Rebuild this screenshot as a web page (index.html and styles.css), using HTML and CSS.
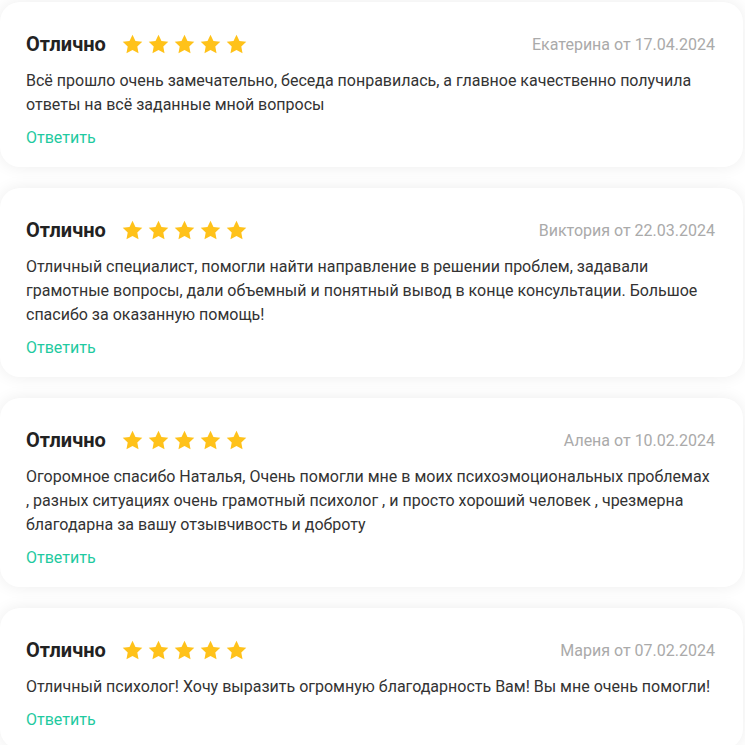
FILE: index.html
```html
<!DOCTYPE html>
<html lang="ru">
<head>
    <meta charset="UTF-8">
    <meta name="viewport" content="width=device-width, initial-scale=1.0">
    <title>Отзывы</title>
    <link rel="stylesheet" href="styles.css">
</head>
<body>

    <!-- Reviews list -->
    <div class="reviews">

        <div class="review">
            <div class="review-head">
                <div class="review-title">Отлично</div>
                <div class="stars">
                    <svg viewBox="0 0 24 24"><path d="M12 1.8l3.1 6.5 7.1.9-5.2 4.9 1.3 7.1L12 17.8l-6.3 3.4 1.3-7.1-5.2-4.9 7.1-.9z"/></svg>
                    <svg viewBox="0 0 24 24"><path d="M12 1.8l3.1 6.5 7.1.9-5.2 4.9 1.3 7.1L12 17.8l-6.3 3.4 1.3-7.1-5.2-4.9 7.1-.9z"/></svg>
                    <svg viewBox="0 0 24 24"><path d="M12 1.8l3.1 6.5 7.1.9-5.2 4.9 1.3 7.1L12 17.8l-6.3 3.4 1.3-7.1-5.2-4.9 7.1-.9z"/></svg>
                    <svg viewBox="0 0 24 24"><path d="M12 1.8l3.1 6.5 7.1.9-5.2 4.9 1.3 7.1L12 17.8l-6.3 3.4 1.3-7.1-5.2-4.9 7.1-.9z"/></svg>
                    <svg viewBox="0 0 24 24"><path d="M12 1.8l3.1 6.5 7.1.9-5.2 4.9 1.3 7.1L12 17.8l-6.3 3.4 1.3-7.1-5.2-4.9 7.1-.9z"/></svg>
                </div>
                <div class="review-author">Екатерина от 17.04.2024</div>
            </div>
            <p class="review-text">Всё прошло очень замечательно, беседа понравилась, а главное качественно получила ответы на всё заданные мной вопросы</p>
            <a class="reply" href="#">Ответить</a>
        </div>

        <div class="review">
            <div class="review-head">
                <div class="review-title">Отлично</div>
                <div class="stars">
                    <svg viewBox="0 0 24 24"><path d="M12 1.8l3.1 6.5 7.1.9-5.2 4.9 1.3 7.1L12 17.8l-6.3 3.4 1.3-7.1-5.2-4.9 7.1-.9z"/></svg>
                    <svg viewBox="0 0 24 24"><path d="M12 1.8l3.1 6.5 7.1.9-5.2 4.9 1.3 7.1L12 17.8l-6.3 3.4 1.3-7.1-5.2-4.9 7.1-.9z"/></svg>
                    <svg viewBox="0 0 24 24"><path d="M12 1.8l3.1 6.5 7.1.9-5.2 4.9 1.3 7.1L12 17.8l-6.3 3.4 1.3-7.1-5.2-4.9 7.1-.9z"/></svg>
                    <svg viewBox="0 0 24 24"><path d="M12 1.8l3.1 6.5 7.1.9-5.2 4.9 1.3 7.1L12 17.8l-6.3 3.4 1.3-7.1-5.2-4.9 7.1-.9z"/></svg>
                    <svg viewBox="0 0 24 24"><path d="M12 1.8l3.1 6.5 7.1.9-5.2 4.9 1.3 7.1L12 17.8l-6.3 3.4 1.3-7.1-5.2-4.9 7.1-.9z"/></svg>
                </div>
                <div class="review-author">Виктория от 22.03.2024</div>
            </div>
            <p class="review-text">Отличный специалист, помогли найти направление в решении проблем, задавали грамотные вопросы, дали объемный и понятный вывод в конце консультации. Большое спасибо за оказанную помощь!</p>
            <a class="reply" href="#">Ответить</a>
        </div>

        <div class="review">
            <div class="review-head">
                <div class="review-title">Отлично</div>
                <div class="stars">
                    <svg viewBox="0 0 24 24"><path d="M12 1.8l3.1 6.5 7.1.9-5.2 4.9 1.3 7.1L12 17.8l-6.3 3.4 1.3-7.1-5.2-4.9 7.1-.9z"/></svg>
                    <svg viewBox="0 0 24 24"><path d="M12 1.8l3.1 6.5 7.1.9-5.2 4.9 1.3 7.1L12 17.8l-6.3 3.4 1.3-7.1-5.2-4.9 7.1-.9z"/></svg>
                    <svg viewBox="0 0 24 24"><path d="M12 1.8l3.1 6.5 7.1.9-5.2 4.9 1.3 7.1L12 17.8l-6.3 3.4 1.3-7.1-5.2-4.9 7.1-.9z"/></svg>
                    <svg viewBox="0 0 24 24"><path d="M12 1.8l3.1 6.5 7.1.9-5.2 4.9 1.3 7.1L12 17.8l-6.3 3.4 1.3-7.1-5.2-4.9 7.1-.9z"/></svg>
                    <svg viewBox="0 0 24 24"><path d="M12 1.8l3.1 6.5 7.1.9-5.2 4.9 1.3 7.1L12 17.8l-6.3 3.4 1.3-7.1-5.2-4.9 7.1-.9z"/></svg>
                </div>
                <div class="review-author">Алена от 10.02.2024</div>
            </div>
            <p class="review-text">Огоромное спасибо Наталья, Очень помогли мне в моих психоэмоциональных проблемах , разных ситуациях очень грамотный психолог , и просто хороший человек , чрезмерна благодарна за вашу отзывчивость и доброту</p>
            <a class="reply" href="#">Ответить</a>
        </div>

        <div class="review">
            <div class="review-head">
                <div class="review-title">Отлично</div>
                <div class="stars">
                    <svg viewBox="0 0 24 24"><path d="M12 1.8l3.1 6.5 7.1.9-5.2 4.9 1.3 7.1L12 17.8l-6.3 3.4 1.3-7.1-5.2-4.9 7.1-.9z"/></svg>
                    <svg viewBox="0 0 24 24"><path d="M12 1.8l3.1 6.5 7.1.9-5.2 4.9 1.3 7.1L12 17.8l-6.3 3.4 1.3-7.1-5.2-4.9 7.1-.9z"/></svg>
                    <svg viewBox="0 0 24 24"><path d="M12 1.8l3.1 6.5 7.1.9-5.2 4.9 1.3 7.1L12 17.8l-6.3 3.4 1.3-7.1-5.2-4.9 7.1-.9z"/></svg>
                    <svg viewBox="0 0 24 24"><path d="M12 1.8l3.1 6.5 7.1.9-5.2 4.9 1.3 7.1L12 17.8l-6.3 3.4 1.3-7.1-5.2-4.9 7.1-.9z"/></svg>
                    <svg viewBox="0 0 24 24"><path d="M12 1.8l3.1 6.5 7.1.9-5.2 4.9 1.3 7.1L12 17.8l-6.3 3.4 1.3-7.1-5.2-4.9 7.1-.9z"/></svg>
                </div>
                <div class="review-author">Мария от 07.02.2024</div>
            </div>
            <p class="review-text">Отличный психолог! Хочу выразить огромную благодарность Вам! Вы мне очень помогли!</p>
            <a class="reply" href="#">Ответить</a>
        </div>

    </div>

</body>
</html>
```

FILE: styles.css
```css
* {
    margin: 0;
    padding: 0;
    box-sizing: border-box;
    font-family: Roboto, "Liberation Sans", Arial, sans-serif;
}

body {
    background: #fff;
    color: #333;
}

/* Reviews list */
.reviews {
    display: flex;
    flex-direction: column;
    gap: 21px;
    padding: 2px 2px 20px 0;
}

.review {
    background: #fff;
    border-radius: 20px;
    box-shadow: 0 0 16px rgba(0, 0, 0, 0.075);
    padding: 30px 28px 17px 26px;
}

.review-head {
    display: flex;
    align-items: center;
    height: 24px;
}

.review-title {
    font-size: 20px;
    font-weight: bold;
    color: #222;
}

.stars {
    display: flex;
    gap: 3px;
    margin-left: 15px;
}

.stars svg {
    width: 23px;
    height: 23px;
    fill: #ffc21a;
}

.review-author {
    margin-left: auto;
    font-size: 16px;
    color: #aaa;
}

.review-text {
    margin-top: 13px;
    font-size: 16px;
    line-height: 24px;
    color: #333;
}

.reply {
    display: block;
    margin-top: 9px;
    font-size: 16px;
    line-height: 24px;
    color: #1fcaa0;
    text-decoration: none;
}
```
